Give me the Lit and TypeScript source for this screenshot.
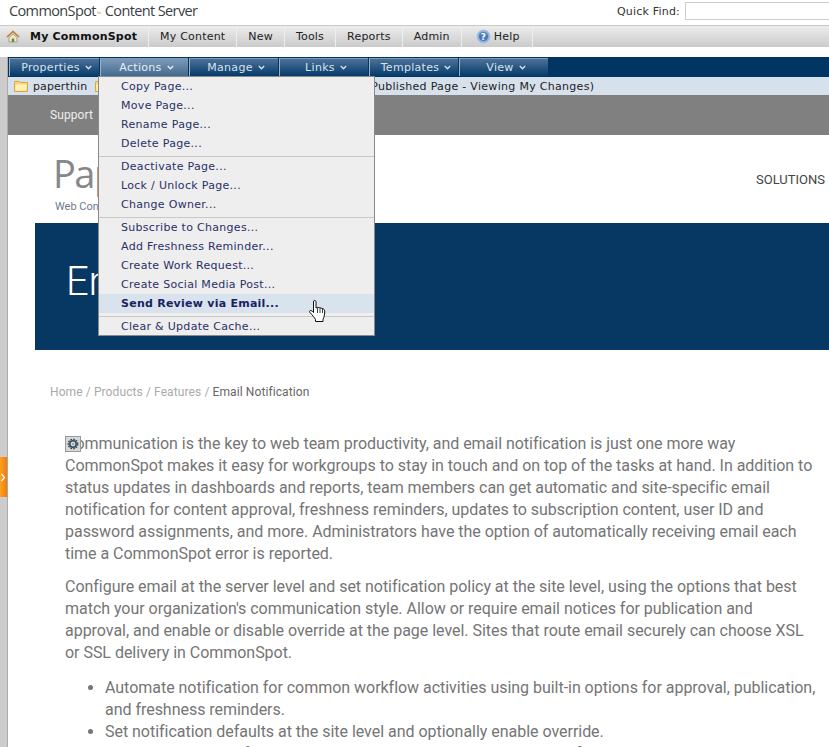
import { LitElement, html, css } from "lit";
import { customElement } from "lit/decorators.js";

const chev = html`<svg class="chev" width="7" height="5" viewBox="0 0 7 5"><path d="M.8 1 3.5 3.8 6.2 1" fill="none" stroke="currentColor" stroke-width="1.3"/></svg>`;
const folder = html`<svg class="fold" width="14" height="12" viewBox="0 0 14 12"><path d="M.5 2.5V1.5h5l1 1h7v9H.5z" fill="#f6d77c" stroke="#d9a840"/><path d="M1.5 4.500h11v6h-11z" fill="#fdf0b8"/></svg>`;

@customElement("app-root")
export class AppRoot extends LitElement {
  static styles = css`
    :host { display: block; width: 829px; height: 747px; overflow: hidden; position: relative; background: #fff;
      font-family: "DejaVu Sans", Verdana, sans-serif; font-size: 11px; color: #222; letter-spacing: .2px; }
    .top { height: 25px; display: flex; align-items: center; justify-content: space-between; padding-left: 9px; box-sizing: border-box; }
    .brand { font-family: "Open Sans", sans-serif; font-size: 14.5px; letter-spacing: -0.62px; color: #3a3f45; display: flex; align-items: baseline; margin-top: -4px; }
    .tm { font-size: 6px; color: #e8a060; margin: 0 4px 0 1px; }
    .qf { display: flex; align-items: center; gap: 5px; color: #333; margin-right: -1px; }
    .qf .in { width: 143px; height: 16px; border: 1px solid #ccc; background: #fff; margin-top: -3px; }
    .qf span { margin-top: -3px; }
    .nav { height: 22px; box-sizing: border-box; border-top: 1px solid #c8c8c8; background: linear-gradient(#ececec, #cbcbcb); display: flex; align-items: center; padding-left: 5px; color: #222; }
    .nav .home { margin: 0 6px 0 1px; }
    .nav .it { height: 20px; display: flex; align-items: center; padding: 0 11px; border-right: 1px solid #eee; }
    .nav .it.b { font-weight: 700; color: #111; padding: 0 11px 0 4px; }
    .nav .it.help { padding: 0 12px 0 14px; gap: 3px; }
    .body { flex: 1; display: flex; }
    .rail { width: 7px; background: #ccc; border-right: 1px solid #aaa; flex: none; height: 700px; margin-top: 10px; position: relative; }
    .tab { position: absolute; left: 0; top: 400px; width: 7px; height: 40px; background: linear-gradient(90deg, #ffa31f, #f07a10); display: flex; align-items: center; color: #fff; }
    .wrap { padding-top: 10px; flex: none; width: 821px; }
    .bar { height: 20px; background: #003564; display: flex; padding: 1px 0 0 1px; box-sizing: border-box; }
    .tabb { height: 18px; box-sizing: border-box; display: flex; align-items: center; justify-content: center; gap: 5px; padding-left: 4px; letter-spacing: .3px; color: #d9e3ee; border-top: 1px solid #7f9bb7; border-left: 1px solid #9db2c7; margin-right: 1px; background: linear-gradient(#4a7299, #063a69); }
    .tabb.on { background: linear-gradient(#7c9ab8, #44698f); color: #e8eef5; }
    .crumb { height: 18px; background: #d7e1ec; display: flex; align-items: center; padding-left: 6px; color: #222; white-space: nowrap; letter-spacing: .3px; }
    .crumb .t { margin: 0 8px 0 5px; letter-spacing: .1px; }
    .crumb .r { margin-left: 262px; }
    .sup { height: 40px; background: #808080; color: #eee; display: flex; align-items: center; padding-left: 42px; font-family: Roboto, sans-serif; font-size: 12px; letter-spacing: .1px; }
    .head { height: 88px; position: relative; }
    .logo { position: absolute; left: 45px; top: 14px; font-family: "Open Sans", sans-serif; font-size: 38px; line-height: 48px; color: #85878a; letter-spacing: -1.5px; }
    .tag { position: absolute; left: 47px; top: 65px; font-family: Roboto, sans-serif; font-size: 11px; color: #6b7a90; letter-spacing: 0; }
    .sol { position: absolute; right: 4px; top: 37px; font-family: Roboto, sans-serif; font-size: 13px; color: #444; letter-spacing: 0; }
    .hero { margin-left: 27px; height: 127px; background: #073763; color: #fff; box-sizing: border-box; padding: 34px 0 0 31px; font-family: Roboto, sans-serif; font-weight: 300; font-size: 40px; line-height: 50px; letter-spacing: 0; }
    .bc { margin: 34px 0 0 42px; font-family: Roboto, sans-serif; font-size: 12px; line-height: 16px; color: #aaa; letter-spacing: .1px; }
    .bc b { font-weight: 400; color: #666; }
    .content { margin: 33px 0 0 57px; width: 755px; font-family: Roboto, sans-serif; font-size: 16px; line-height: 22px; color: #757575; position: relative; letter-spacing: -0.03px; }
    .content p { margin: 0 0 11px; }
    .content p.l { margin-bottom: 13px; }
    .content ul { margin: 0; padding-left: 40px; }
    .gear { position: absolute; left: 0; top: 3px; width: 16px; height: 16px; box-sizing: border-box; border: 1px solid #999; background: #d8d8d8; display: flex; align-items: center; justify-content: center; }
    .menu { position: absolute; left: 98px; top: 76px; width: 277px; height: 260px; box-sizing: border-box; border: 1px solid #8a8a8a; background: #eee; color: #2a3068; display: flex; flex-direction: column; z-index: 3; }
    .mi { height: 19px; line-height: 19px; padding-left: 22px; flex: none; letter-spacing: .3px; }
    .mi.hi { background: #d9e3ee; font-weight: 700; color: #1a2260; letter-spacing: .25px; }
    .sep { height: 1px; background: #c8c8c8; margin: 3px 0 0; flex: none; }
    .hand { position: absolute; left: 308px; top: 299px; z-index: 4; }
  `;

  render() {
    const tabs: [string, number, boolean?][] = [["Properties", 90], ["Actions", 88, true], ["Manage", 89], ["Links", 89], ["Templates", 89], ["View", 89]];
    const groups = [
      ["Copy Page...", "Move Page...", "Rename Page...", "Delete Page..."],
      ["Deactivate Page...", "Lock / Unlock Page...", "Change Owner..."],
      ["Subscribe to Changes...", "Add Freshness Reminder...", "Create Work Request...", "Create Social Media Post...", "Send Review via Email..."],
      ["Clear & Update Cache..."],
    ];
    return html`
      <div class="top">
        <div class="brand">CommonSpot<span class="tm">™</span>Content Server</div>
        <div class="qf"><span>Quick Find:</span><div class="in"></div></div>
      </div>
      <div class="nav">
        <svg class="home" width="14" height="13" viewBox="0 0 14 13"><path d="M1 7 7 1.500 13 7" fill="none" stroke="#c07a30" stroke-width="1.600"/><path d="M3 7.500 7 4l4 3.500V12H3z" fill="#f3e6c4" stroke="#8c8c6c" stroke-width=".7"/><path d="M5.800 8.500h2.400V12H5.800z" fill="#5a8a4a"/></svg>
        <div class="it b">My CommonSpot</div>
        <div class="it">My Content</div>
        <div class="it">New</div>
        <div class="it">Tools</div>
        <div class="it">Reports</div>
        <div class="it">Admin</div>
        <div class="it help">
          <svg width="15" height="15" viewBox="0 0 15 15"><circle cx="7.500" cy="7.500" r="6.500" fill="#8fb0dc" stroke="#a9c0e2"/><circle cx="7.500" cy="7.500" r="4.600" fill="#4a78bd"/><text x="7.500" y="10.600" font-size="9" font-weight="700" text-anchor="middle" fill="#fff" font-family="DejaVu Sans">?</text></svg>
          Help
        </div>
      </div>
      <div class="body">
        <div class="rail">
          <div class="tab"><svg width="6" height="9" viewBox="0 0 6 9"><path d="M1.500 1 4.500 4.500 1.500 8" fill="none" stroke="#fff" stroke-width="1.200"/></svg></div>
        </div>
        <div class="wrap">
          <div class="bar">
            ${tabs.map(([t, w, on]) => html`<div class="tabb ${on ? "on" : ""}" style="width:${w}px">${t} ${chev}</div>`)}
          </div>
          <div class="crumb">
            ${folder}<span class="t">paperthin</span>${folder}
            <span class="r">Published Page - Viewing My Changes)</span>
          </div>
          <div class="sup">Support</div>
          <div class="head">
            <div class="logo">PaperThin</div>
            <div class="tag">Web Content Management</div>
            <div class="sol">SOLUTIONS</div>
          </div>
          <div class="hero">Email Notification</div>
          <div class="bc">Home / Products / Features / <b>Email Notification</b></div>
          <div class="content">
            <div class="gear">
              <svg width="12" height="12" viewBox="0 0 12 12"><circle cx="6" cy="6" r="3.200" fill="none" stroke="#34495e" stroke-width="1.500"/><circle cx="6" cy="6" r="4.800" fill="none" stroke="#34495e" stroke-width="1.300" stroke-dasharray="1.700 1.070"/><circle cx="6" cy="6" r="1" fill="#8a98a6"/></svg>
            </div>
            <p>Communication is the key to web team productivity, and email notification is just one more way CommonSpot makes it easy for workgroups to stay in touch and on top of the tasks at hand. In addition to status updates in dashboards and reports, team members can get automatic and site-specific email notification for content approval, freshness reminders, updates to subscription content, user ID and password assignments, and more. Administrators have the option of automatically receiving email each time a CommonSpot error is reported.</p>
            <p class="l">Configure email at the server level and set notification policy at the site level, using the options that best match your organization's communication style. Allow or require email notices for publication and approval, and enable or disable override at the page level. Sites that route email securely can choose XSL or SSL delivery in CommonSpot.</p>
            <ul>
              <li>Automate notification for common workflow activities using built-in options for approval, publication, and freshness reminders.</li>
              <li>Set notification defaults at the site level and optionally enable override.</li>
              <li>Choose among notification types to suit your team's needs and preferences.</li>
            </ul>
          </div>
        </div>
      </div>
      <div class="menu">
        ${groups.map((g, i) => html`
          ${i ? html`<div class="sep"></div>` : ""}
          ${g.map((m) => html`<div class="mi ${m.startsWith("Send") ? "hi" : ""}">${m}</div>`)}
        `)}
      </div>
      <svg class="hand" width="20" height="25" viewBox="0 0 20 25">
        <path d="M5.500 2c1-1 2.200-.6 2.500.6V9l1.500-.6 2 .3 2 .5 2 .8c1 .6 1.200 1.400 1.200 3 0 3-.7 5-1.700 7.500v2H7.500v-2c-1.300-2-2.600-3.800-5.500-7-.9-1-.2-2.300 1-2 1 .2 1.600 1 2.500 2z" fill="#fff" stroke="#111" stroke-width="1"/>
        <path d="M9.500 9v5M12 9v5M14.500 10v4" stroke="#111" stroke-width=".8" fill="none"/>
      </svg>
    `;
  }
}
